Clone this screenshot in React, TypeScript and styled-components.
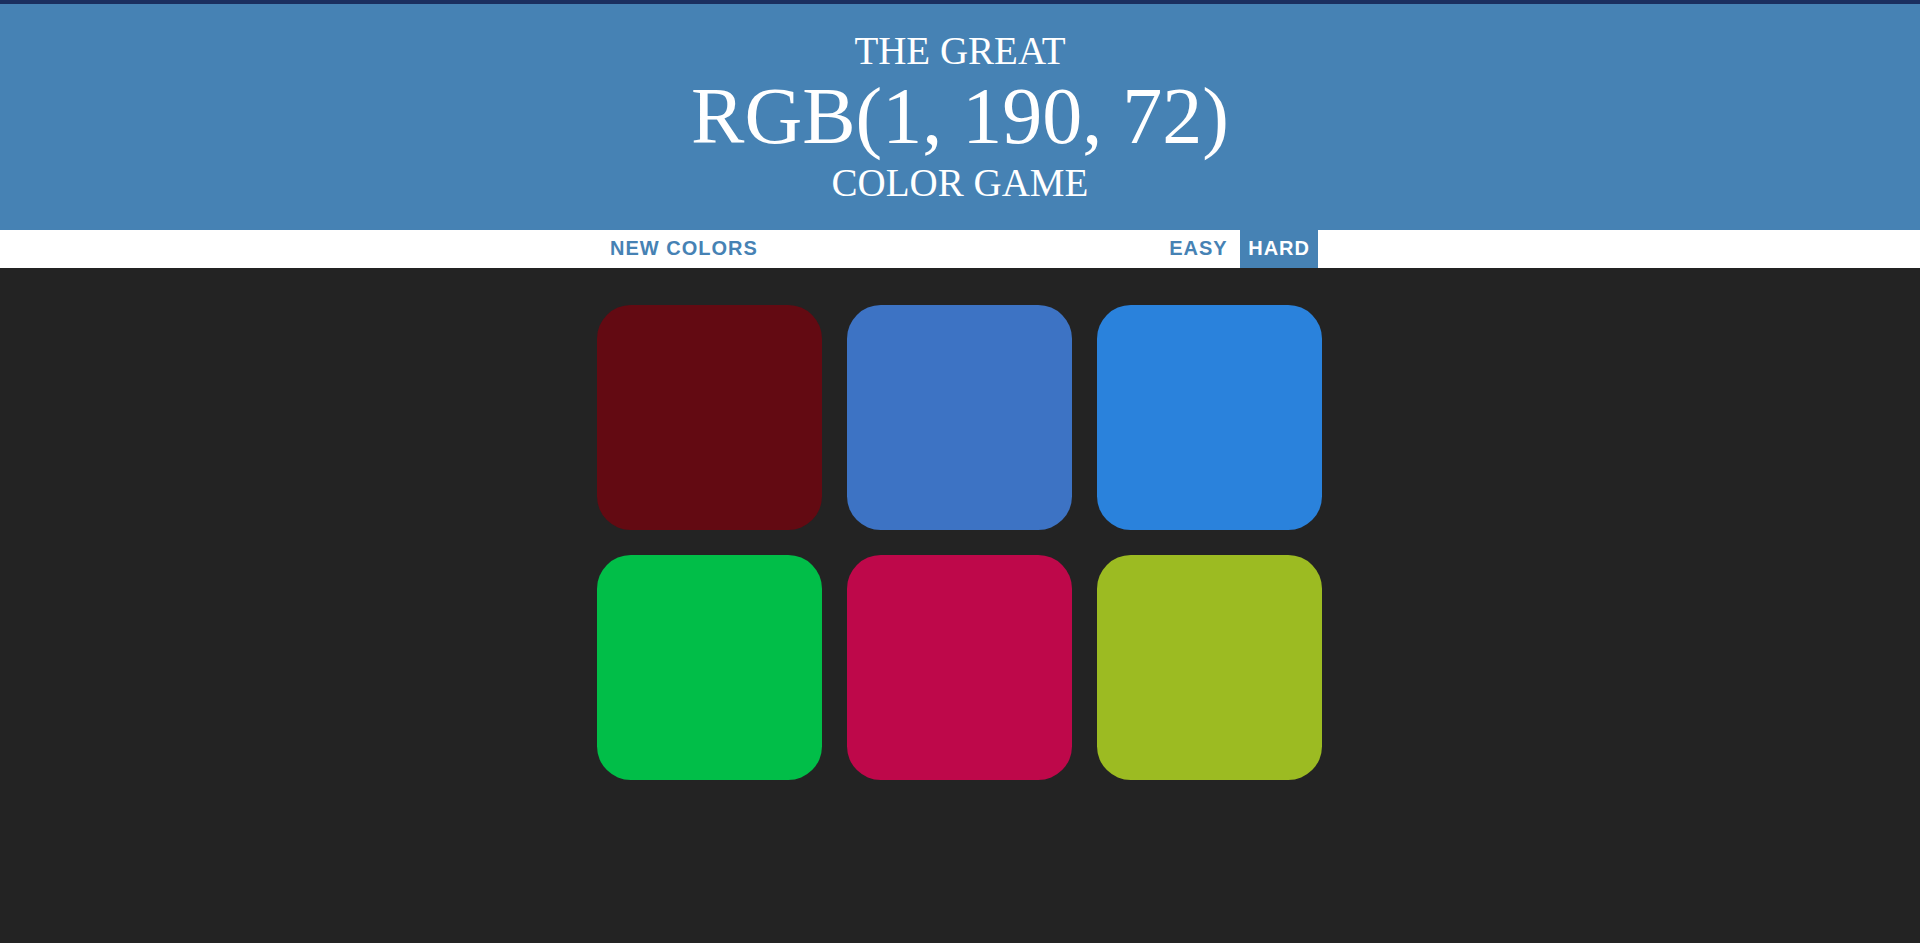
import React from "react";
import styled, { createGlobalStyle } from "styled-components";

const GlobalStyle = createGlobalStyle`
  html, body {
    margin: 0;
    padding: 0;
    background: #232323;
  }
  body {
    font-family: "Liberation Sans", Arial, sans-serif;
  }
`;

const Page = styled.div`
  min-height: 943px;
  background: #232323;
`;

const Title = styled.h1`
  margin: 0;
  border-top: 4px solid #1b2f5f;
  background: #4682b4;
  color: #ffffff;
  text-align: center;
  font-family: "Liberation Serif", "Times New Roman", serif;
  font-weight: normal;
  text-transform: uppercase;
  padding: 25px 0 26px;
`;

const TitleLine = styled.span<{ $size: number; $lh: number }>`
  display: block;
  font-size: ${(p) => p.$size}px;
  line-height: ${(p) => p.$lh}px;
`;

const Stripe = styled.div`
  background: #ffffff;
  height: 38px;
  display: flex;
  justify-content: center;
`;

const StripeInner = styled.div`
  width: 750px;
  box-sizing: border-box;
  padding: 0 17px;
  display: flex;
  justify-content: space-between;
  align-items: stretch;
`;

const ModeGroup = styled.div`
  display: flex;
  gap: 4.5px;
`;

const StripeButton = styled.button<{ $active?: boolean }>`
  border: none;
  margin: 0;
  height: 100%;
  padding: 0 8px 2px;
  font-family: "Liberation Sans", Arial, sans-serif;
  font-size: 20px;
  font-weight: 700;
  letter-spacing: 1px;
  text-transform: uppercase;
  cursor: pointer;
  outline: none;
  background: ${(p) => (p.$active ? "#4682b4" : "transparent")};
  color: ${(p) => (p.$active ? "#ffffff" : "#4682b4")};
`;

const Board = styled.div`
  width: 750px;
  box-sizing: border-box;
  margin: 0 auto;
  padding: 37px 12.45px;
  display: grid;
  grid-template-columns: repeat(3, 225px);
  column-gap: 24.9px;
  row-gap: 25px;
`;

const Square = styled.div<{ $color: string }>`
  width: 225px;
  height: 225px;
  border-radius: 15%;
  background: ${(p) => p.$color};
`;

const colors = [
  "rgb(99, 10, 18)",
  "rgb(61, 115, 196)",
  "rgb(42, 130, 220)",
  "rgb(1, 190, 72)",
  "rgb(190, 8, 74)",
  "rgb(156, 187, 34)",
];

export default function App() {
  return (
    <Page>
      <GlobalStyle />
      <Title>
        <TitleLine $size={39} $lh={43}>The Great</TitleLine>
        <TitleLine $size={80} $lh={89}>RGB(1, 190, 72)</TitleLine>
        <TitleLine $size={39} $lh={43}>Color Game</TitleLine>
      </Title>
      <Stripe>
        <StripeInner>
          <StripeButton>New Colors</StripeButton>
          <ModeGroup>
            <StripeButton>Easy</StripeButton>
            <StripeButton $active>Hard</StripeButton>
          </ModeGroup>
        </StripeInner>
      </Stripe>
      <Board>
        {colors.map((c, i) => (
          <Square key={i} $color={c} />
        ))}
      </Board>
    </Page>
  );
}
